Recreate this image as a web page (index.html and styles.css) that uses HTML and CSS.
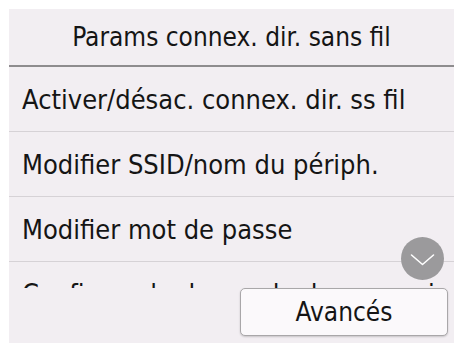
FILE: index.html
```html
<!DOCTYPE html>
<html lang="fr">
<head>
<meta charset="utf-8">
<title>Params connex. dir. sans fil</title>
<link rel="stylesheet" href="styles.css">
</head>
<body>
<div class="screen">
  <div class="header">Params connex. dir. sans fil</div>
  <div class="list">
    <div class="row">Activer/désac. connex. dir. ss fil</div>
    <div class="row">Modifier SSID/nom du périph.</div>
    <div class="row">Modifier mot de passe</div>
    <div class="row row-cut">Confirmer la demande de connexion</div>
  </div>
  <div class="footer">
    <button class="btn">Avancés</button>
  </div>
  <div class="scroll-down">
    <svg width="43" height="43" viewBox="0 0 43 43">
      <circle cx="21.5" cy="21.5" r="21.5" fill="#9b9a9c"/>
      <path d="M10.5 18 L21.5 27.5 L32.5 18" fill="none" stroke="#ffffff" stroke-width="1.6" stroke-linecap="round" stroke-linejoin="round"/>
    </svg>
  </div>
</div>
</body>
</html>
```

FILE: styles.css
```css
html, body {
  margin: 0;
  padding: 0;
  background: #ffffff;
}

.screen {
  position: relative;
  margin: 9px 0 0 9px;
  width: 445px;
  height: 334px;
  background: #f2eef2;
  display: flex;
  flex-direction: column;
  overflow: hidden;
  font-family: "DejaVu Sans Condensed", "DejaVu Sans", sans-serif;
  font-stretch: condensed;
  color: #151515;
}

.header {
  flex: none;
  height: 56px;
  border-bottom: 2px solid #8e8c8e;
  display: flex;
  align-items: center;
  justify-content: center;
  font-size: 26px;
}

.list {
  flex: none;
  height: 221px;
  overflow: hidden;
}

.row {
  height: 64px;
  border-bottom: 1px solid #d6d2d6;
  display: flex;
  align-items: center;
  padding-left: 13px;
  font-size: 27px;
  white-space: nowrap;
}

.row-cut {
  height: 62px;
  padding-bottom: 2px;
}

.footer {
  flex: 1;
  display: flex;
  justify-content: flex-end;
  align-items: flex-start;
  padding-right: 6px;
}

.btn {
  width: 208px;
  height: 48px;
  background: #fbf9fb;
  border: 1px solid #a9a7a9;
  border-radius: 5px;
  box-shadow: 0 1px 2px rgba(0, 0, 0, 0.18);
  font-family: inherit;
  font-stretch: condensed;
  font-size: 26px;
  color: #151515;
  padding: 0;
}

.scroll-down {
  position: absolute;
  left: 392px;
  top: 228px;
  width: 43px;
  height: 43px;
  line-height: 0;
}
```
